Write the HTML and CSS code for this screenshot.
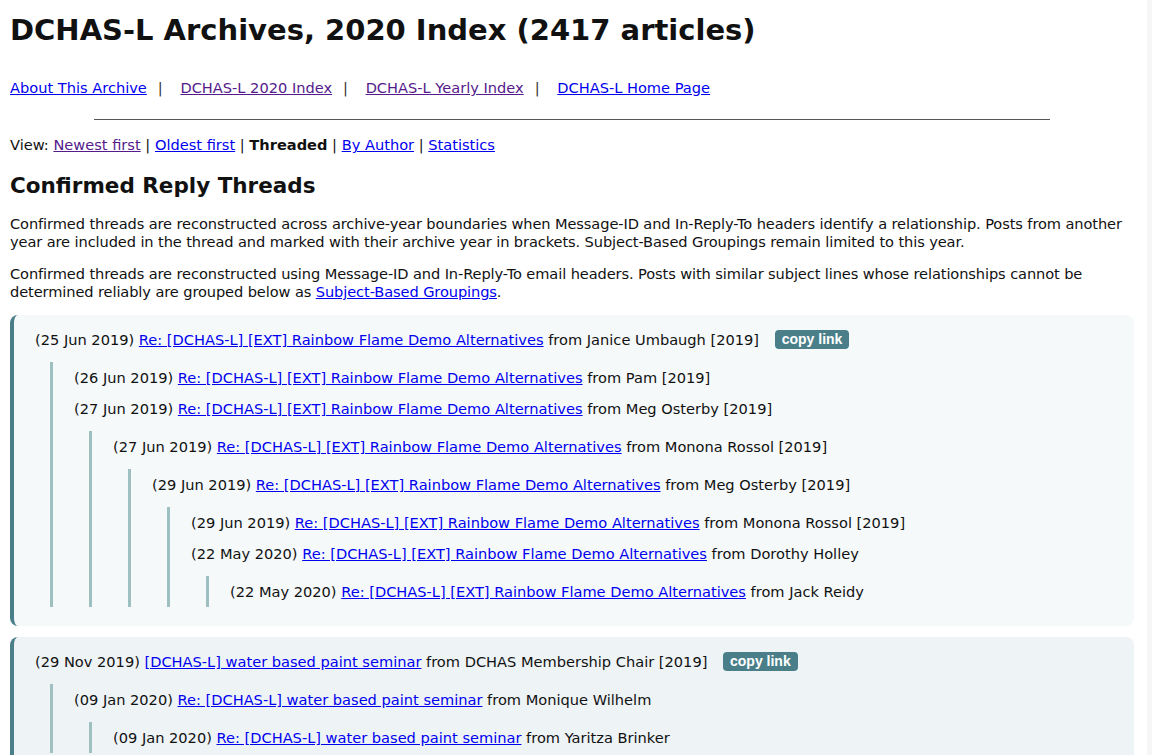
FILE: index.html
```html
<!DOCTYPE html>
<html lang="en">
<head>
    <meta charset="UTF-8">
    <meta name="viewport" content="width=device-width, initial-scale=1.0">
    <title>DCHAS-L Archives, 2020 Index</title>
    <link rel="stylesheet" href="styles.css">
</head>
<body>

    <h1>DCHAS-L Archives, 2020 Index (2417 articles)</h1>

    <!-- Archive navigation -->
    <p class="nav">
        <a href="#">About This Archive</a><span class="sep">|</span>
        <a href="#" class="seen">DCHAS-L 2020 Index</a><span class="sep">|</span>
        <a href="#" class="seen">DCHAS-L Yearly Index</a><span class="sep">|</span>
        <a href="#">DCHAS-L Home Page</a>
    </p>
    <hr>

    <p class="views">View: <a href="#" class="seen">Newest first</a> | <a href="#">Oldest first</a> | <b>Threaded</b> | <a href="#">By Author</a> | <a href="#">Statistics</a></p>

    <h2>Confirmed Reply Threads</h2>
    <p class="intro">Confirmed threads are reconstructed across archive-year boundaries when Message-ID and In-Reply-To headers identify a relationship. Posts from another year are included in the thread and marked with their archive year in brackets. Subject-Based Groupings remain limited to this year.</p>
    <p class="intro">Confirmed threads are reconstructed using Message-ID and In-Reply-To email headers. Posts with similar subject lines whose relationships cannot be determined reliably are grouped below as <a href="#">Subject-Based Groupings</a>.</p>

    <!-- Thread 1 -->
    <div class="thread">
        <ul class="root">
            <li>(25 Jun 2019) <a href="#">Re: [DCHAS-L] [EXT] Rainbow Flame Demo Alternatives</a> from Janice Umbaugh [2019] <button class="copy">copy link</button>
                <ul>
                    <li>(26 Jun 2019) <a href="#">Re: [DCHAS-L] [EXT] Rainbow Flame Demo Alternatives</a> from Pam [2019]</li>
                    <li>(27 Jun 2019) <a href="#">Re: [DCHAS-L] [EXT] Rainbow Flame Demo Alternatives</a> from Meg Osterby [2019]
                        <ul>
                            <li>(27 Jun 2019) <a href="#">Re: [DCHAS-L] [EXT] Rainbow Flame Demo Alternatives</a> from Monona Rossol [2019]
                                <ul>
                                    <li>(29 Jun 2019) <a href="#">Re: [DCHAS-L] [EXT] Rainbow Flame Demo Alternatives</a> from Meg Osterby [2019]
                                        <ul>
                                            <li>(29 Jun 2019) <a href="#">Re: [DCHAS-L] [EXT] Rainbow Flame Demo Alternatives</a> from Monona Rossol [2019]</li>
                                            <li>(22 May 2020) <a href="#">Re: [DCHAS-L] [EXT] Rainbow Flame Demo Alternatives</a> from Dorothy Holley
                                                <ul>
                                                    <li>(22 May 2020) <a href="#">Re: [DCHAS-L] [EXT] Rainbow Flame Demo Alternatives</a> from Jack Reidy</li>
                                                </ul>
                                            </li>
                                        </ul>
                                    </li>
                                </ul>
                            </li>
                        </ul>
                    </li>
                </ul>
            </li>
        </ul>
    </div>

    <!-- Thread 2 -->
    <div class="thread alt">
        <ul class="root">
            <li>(29 Nov 2019) <a href="#">[DCHAS-L] water based paint seminar</a> from DCHAS Membership Chair [2019] <button class="copy">copy link</button>
                <ul>
                    <li>(09 Jan 2020) <a href="#">Re: [DCHAS-L] water based paint seminar</a> from Monique Wilhelm
                        <ul>
                            <li>(09 Jan 2020) <a href="#">Re: [DCHAS-L] water based paint seminar</a> from Yaritza Brinker</li>
                        </ul>
                    </li>
                </ul>
            </li>
        </ul>
    </div>

</body>
</html>
```

FILE: styles.css
```css
html {
    border-right: 5px solid #f6f6f6;
}
body {
    margin: 0;
    padding: 0 13px 0 10px;
    font-family: "DejaVu Sans", Verdana, sans-serif;
    font-size: 14.6px;
    color: #111;
    background-color: white;
}
h1 {
    font-size: 29px;
    margin: 13px 0 32px;
}
h2 {
    font-size: 21.5px;
    margin: 19px 0 17px;
}
p {
    line-height: 18px;
    margin: 0 0 14px;
}
.intro {
    letter-spacing: -0.1px;
}
a {
    color: #0000ee;
}
a.seen {
    color: #551a8b;
}
.nav {
    margin: 0 0 22px;
}
.sep {
    margin: 0 13px 0 11px;
    color: #333;
}
hr {
    width: 85%;
    border: none;
    border-top: 1px solid #555;
    margin: 0 auto 16px;
}
.views {
    margin-bottom: 0;
}
.thread {
    background-color: #f5f9fa;
    border-left: 4px solid #4a7f8a;
    border-radius: 8px;
    padding: 9px 21px 19px;
    margin-bottom: 11px;
}
.thread.alt {
    background-color: #eef3f6;
}
.thread ul {
    list-style: none;
    margin: 7px 0 0 15px;
    padding: 0 0 0 21px;
    border-left: 3px solid #9fc0c0;
}
.thread ul.root {
    margin: 0;
    padding: 0;
    border: none;
}
.thread li {
    line-height: 31px;
}
.copy {
    margin-left: 11px;
    background-color: #4a7f8a;
    color: white;
    border: none;
    border-radius: 4px;
    font-family: "Liberation Sans", Arial, sans-serif;
    font-weight: bold;
    font-size: 14px;
    line-height: 15px;
    padding: 2px 7px;
    cursor: pointer;
    vertical-align: 1px;
}
```
